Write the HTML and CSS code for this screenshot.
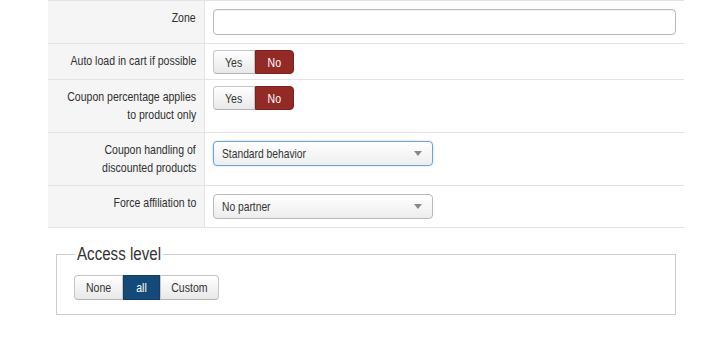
FILE: index.html
```html
<!DOCTYPE html>
<html>
<head>
<meta charset="utf-8">
<link rel="stylesheet" href="styles.css">
</head>
<body>
<div class="page">
  <div class="form-table">
    <div class="row">
      <div class="label"><span class="t">Zone</span></div>
      <div class="ctrl"><input class="text-input" type="text"></div>
    </div>
    <div class="row">
      <div class="label"><span class="t">Auto load in cart if possible</span></div>
      <div class="ctrl ctrl-toggle">
        <div class="btn-group">
          <span class="btn btn-yes"><span class="tc">Yes</span></span><span class="btn btn-danger"><span class="tc">No</span></span>
        </div>
      </div>
    </div>
    <div class="row">
      <div class="label"><span class="t">Coupon percentage applies</span><span class="t">to product only</span></div>
      <div class="ctrl ctrl-toggle">
        <div class="btn-group">
          <span class="btn btn-yes"><span class="tc">Yes</span></span><span class="btn btn-danger"><span class="tc">No</span></span>
        </div>
      </div>
    </div>
    <div class="row">
      <div class="label"><span class="t">Coupon handling of</span><span class="t">discounted products</span></div>
      <div class="ctrl">
        <div class="select focused"><span class="tl">Standard behavior</span><i class="caret"></i></div>
      </div>
    </div>
    <div class="row">
      <div class="label"><span class="t">Force affiliation to</span></div>
      <div class="ctrl">
        <div class="select"><span class="tl">No partner</span><i class="caret"></i></div>
      </div>
    </div>
  </div>

  <fieldset class="access">
    <legend><span class="tl legend-text">Access level</span></legend>
    <div class="btn-group">
      <span class="btn btn-none"><span class="tc">None</span></span><span class="btn btn-primary"><span class="tc">all</span></span><span class="btn btn-custom"><span class="tc">Custom</span></span>
    </div>
  </fieldset>
</div>
</body>
</html>
```

FILE: styles.css
```css
html, body {
  margin: 0;
  padding: 0;
  background: #fff;
}
body {
  font-family: "Liberation Sans", Arial, sans-serif;
  font-size: 13px;
  color: #333;
}
.t, .tc, .tl {
  display: inline-block;
  white-space: nowrap;
  transform: scaleX(0.81);
}
.t {
  transform-origin: right center;
}
.tc {
  transform-origin: center center;
}
.tl {
  transform-origin: left center;
  transform: scaleX(0.79);
}
.page {
  padding: 0 26px 0 48px;
}
.form-table {
  width: 636px;
  border-bottom: 1px solid #e3e3e3;
}
.row {
  display: flex;
  border-top: 1px solid #e3e3e3;
}
.label {
  width: 148px;
  flex: none;
  display: flex;
  flex-direction: column;
  align-items: flex-end;
  background: #f5f5f5;
  border-right: 1px solid #e3e3e3;
  padding: 8px 8px 8px 0;
  line-height: 18px;
  color: #2f2f2f;
}
.ctrl {
  flex: 1;
  padding: 8px;
}
.ctrl-toggle {
  padding: 6px 8px 5px;
}
.text-input {
  display: block;
  box-sizing: border-box;
  width: 463px;
  height: 26px;
  margin: 0;
  border: 1px solid #b9b9b9;
  border-radius: 4px;
  background: #fff;
  box-shadow: inset 0 1px 1px rgba(0,0,0,0.06);
}
.btn-group {
  display: inline-flex;
}
.btn {
  display: inline-flex;
  justify-content: center;
  align-items: center;
  box-sizing: border-box;
  height: 24px;
  padding: 0;
  border: 1px solid #c5c5c5;
  border-bottom-color: #b3b3b3;
  background: linear-gradient(#ffffff, #e8e8e8);
  color: #333;
  font-size: 13px;
  white-space: nowrap;
}
.btn:first-child {
  border-radius: 4px 0 0 4px;
}
.btn:last-child {
  border-radius: 0 4px 4px 0;
}
.btn-yes {
  width: 42px;
}
.btn-danger {
  background: #942a25;
  border-color: #7c221e;
  color: #fff;
  width: 39px;
}
.select {
  box-sizing: border-box;
  width: 220px;
  height: 25px;
  border: 1px solid #b9b9b9;
  border-radius: 4px;
  background: linear-gradient(#ffffff, #ededed);
  display: flex;
  align-items: center;
  padding: 0 10px 0 8px;
}
.select .tl {
  flex: 1;
}
.select.focused {
  border-color: #6fa1dc;
  box-shadow: 0 0 2px rgba(82,168,236,0.5);
}
.caret {
  width: 0;
  height: 0;
  border-left: 4px solid transparent;
  border-right: 4px solid transparent;
  border-top: 5px solid #888;
}
.access {
  width: 620px;
  box-sizing: border-box;
  margin: 16px 0 0 8px;
  padding: 11px 16px 14px 17px;
  border: 1px solid #ccc;
}
.access legend {
  font-size: 18px;
  padding: 0 2px;
  margin-left: 1px;
  line-height: 20px;
  color: #333;
}
.legend-text {
  transform: scaleX(0.84);
  margin-right: -16px;
}
.access .btn {
  height: 25px;
}
.btn-none {
  width: 49px;
}
.btn-primary {
  background: #144a7a;
  border-color: #123f68;
  color: #fff;
  width: 37px;
}
.btn-custom {
  width: 59px;
}
```
